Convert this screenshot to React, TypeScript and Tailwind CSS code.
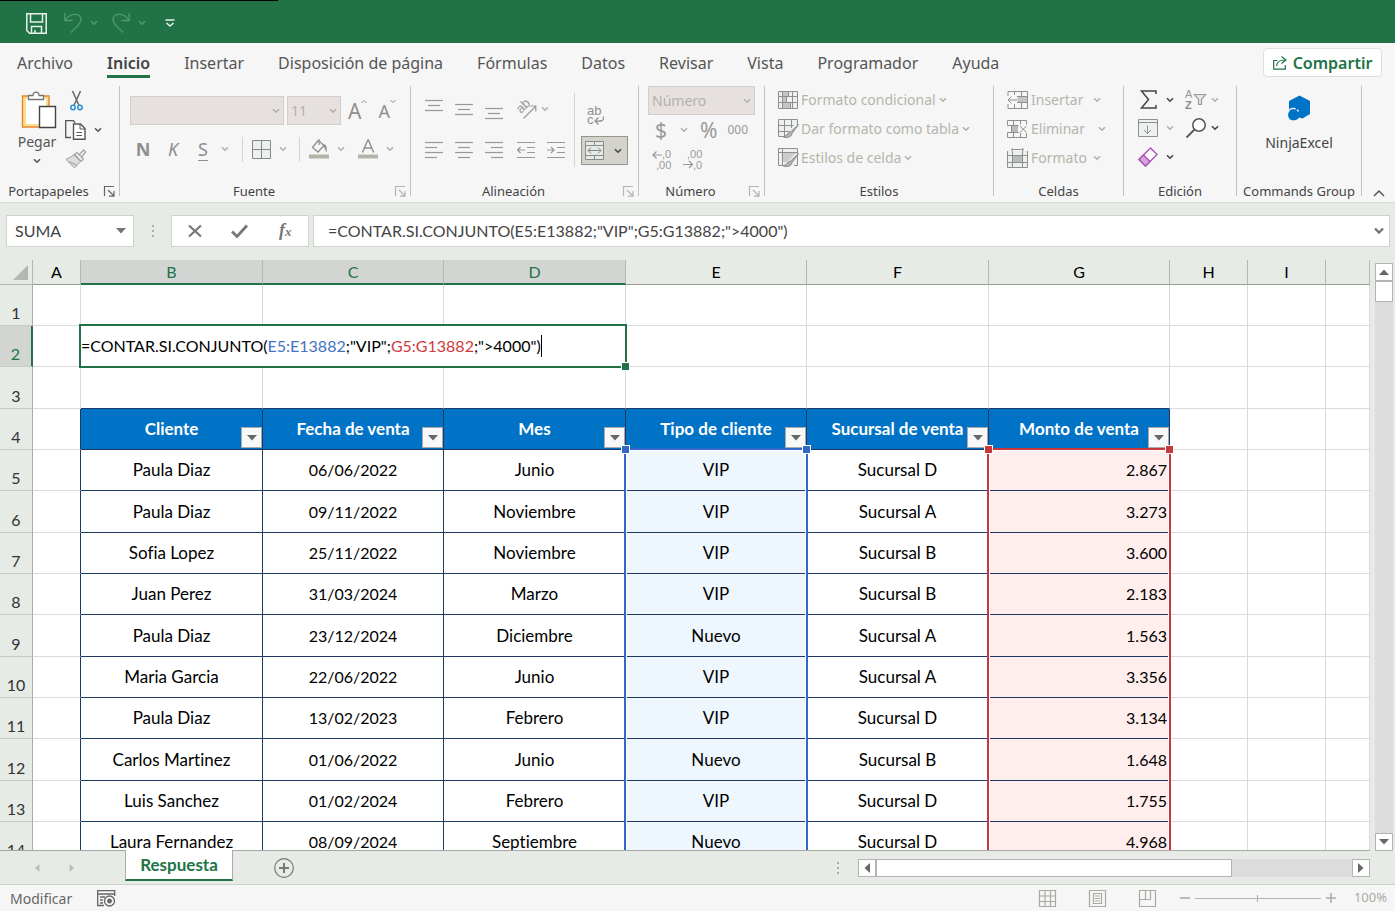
import type { ReactNode } from "react"

const tabs = ['Archivo', 'Inicio', 'Insertar', 'Disposición de página', 'Fórmulas', 'Datos', 'Revisar', 'Vista', 'Programador', 'Ayuda']

const headers = ['Cliente', 'Fecha de venta', 'Mes', 'Tipo de cliente', 'Sucursal de venta', 'Monto de venta']

const rows = [
    ['Paula Diaz', '06/06/2022', 'Junio', 'VIP', 'Sucursal D', '2.867'],
    ['Paula Diaz', '09/11/2022', 'Noviembre', 'VIP', 'Sucursal A', '3.273'],
    ['Sofia Lopez', '25/11/2022', 'Noviembre', 'VIP', 'Sucursal B', '3.600'],
    ['Juan Perez', '31/03/2024', 'Marzo', 'VIP', 'Sucursal B', '2.183'],
    ['Paula Diaz', '23/12/2024', 'Diciembre', 'Nuevo', 'Sucursal A', '1.563'],
    ['Maria Garcia', '22/06/2022', 'Junio', 'VIP', 'Sucursal A', '3.356'],
    ['Paula Diaz', '13/02/2023', 'Febrero', 'VIP', 'Sucursal D', '3.134'],
    ['Carlos Martinez', '01/06/2022', 'Junio', 'Nuevo', 'Sucursal B', '1.648'],
    ['Luis Sanchez', '01/02/2024', 'Febrero', 'VIP', 'Sucursal D', '1.755'],
    ['Laura Fernandez', '08/09/2024', 'Septiembre', 'Nuevo', 'Sucursal D', '4.968'],
]

const Chevron = ({ className = 'text-[#b1b1a8]' }: { className?: string }) => (
    <svg width="8" height="6" viewBox="0 0 8 6" fill="none" stroke="currentColor" strokeWidth="1.6" className={`shrink-0 ${className}`}>
        <path d="M1 1.2 4 4.2 7 1.2" />
    </svg>
)

const Triangle = ({ className = '' }: { className?: string }) => (
    <svg width="10" height="6" viewBox="0 0 10 6" fill="currentColor" className={className}>
        <path d="M0 0h10L5 5.5z" />
    </svg>
)

interface iconProps {
    w: number
    h: number
    className?: string
    children: ReactNode
}

const Icon = ({ w, h, className = '', children }: iconProps) => (
    <svg width={w} height={h} viewBox={`0 0 ${w} ${h}`} fill="none" stroke="currentColor" className={`shrink-0 overflow-visible font-['Liberation_Sans',sans-serif] ${className}`}>
        {children}
    </svg>
)

// horizontal strokes used by every alignment button
const Lines = ({ bars }: { bars: number[][] }) => (
    <Icon w={18} h={20} className="text-[#999]">
        {bars.map(([x, y, len], i) => <path key={i} strokeWidth="1.2" d={`M${x} ${y}.5h${len}`} />)}
    </Icon>
)

const Launcher = ({ dark = false }: { dark?: boolean }) => (
    <button aria-label="Más opciones" className="w-[22px] flex items-center pl-[7px]">
        <Icon w={11} h={11} className={dark ? 'text-[#666]' : 'text-[#b5b5ad]'}>
            <path d="M.5 10V.5H10M4 4l6 6M10 5v5.2H5" strokeWidth="1.2" />
        </Icon>
    </button>
)

interface groupProps {
    label: string
    width: string
    launcher?: ReactNode
    children: ReactNode
}

const Group = ({ label, width, launcher, children }: groupProps) => (
    <section className={`h-[113px] flex flex-col shrink-0 ${width}`}>
        <div className="h-[97px]">{children}</div>
        <div className="flex h-4">
            <h2 className="flex-1 text-center text-[13px] leading-4 text-[#444] whitespace-nowrap">{label}</h2>
            {launcher}
        </div>
    </section>
)

const Divider = () => <div className="w-px h-[110px] bg-[#c3c3bb] shrink-0" />

const Split = ({ label, chevron, children }: { label: string, chevron?: string, children: ReactNode }) => (
    <button aria-label={label} className="flex items-center gap-2">
        <span className="w-5 flex justify-center">{children}</span>
        <Chevron className={chevron} />
    </button>
)

const Clipboard = () => (
    <Group label="Portapapeles" width="w-[119px]" launcher={<Launcher dark />}>
        <div className="flex pl-[17px] gap-2">
            <button className="flex flex-col items-center w-10 pt-[5px] text-[14px] text-[#555]">
                <Icon w={36} h={39} className="ml-1">
                    <path d="M3.500 6.500h23v28h-23z" fill="#fff" stroke="#ffdc94" strokeWidth="3" />
                    <path d="M9 5H1.500v31H18M21 5h7v10" stroke="#e08a2e" strokeWidth="1.400" />
                    <path d="M7.500 8.500v-4h4.500c0-4.500 6-4.500 6 0h4.500v4z" fill="#fff" stroke="#777" strokeWidth="1.300" />
                    <path d="M18.500 15.500h16v21h-16z" fill="#fff" stroke="#444" strokeWidth="1.400" />
                </Icon>
                <span className="leading-6">Pegar</span>
                <Chevron className="text-[#555] mt-1" />
            </button>
            <div className="flex flex-col pt-[3px]">
                <button aria-label="Cortar" className="h-[24px] flex items-center pl-[5px]">
                    <Icon w={13} h={20}>
                        <path d="M2.500 0 8.800 14M10.500 0 4.200 14" stroke="#666" strokeWidth="1.500" />
                        <circle cx="3" cy="16.500" r="2.200" stroke="#2b8fd0" strokeWidth="1.500" />
                        <circle cx="10" cy="16.500" r="2.200" stroke="#2b8fd0" strokeWidth="1.500" />
                    </Icon>
                </button>
                <div className="h-[34px] flex items-center">
                    <button aria-label="Copiar" className="flex items-center gap-2">
                        <Icon w={21} h={20} className="text-[#555]">
                            <path d="M6 17.500H.700V.700h7.500l2 2" strokeWidth="1.300" />
                            <path d="M8.500 4h7l4.500 4.500v10.800H8.500z" fill="#fff" strokeWidth="1.400" />
                            <path d="M15 4v5h5M11.500 12.500h5.500M11.500 15.500h5.500" />
                        </Icon>
                        <Chevron className="text-[#555]" />
                    </button>
                </div>
                <button aria-label="Copiar formato" className="h-[24px] flex items-center">
                    <Icon w={22} h={20} className="text-[#a3a3a3]">
                        <path d="M1 10.500 9 6l6.500 6.500L9.500 19z" fill="#ddd" />
                        <path d="m4 12.500 8 4M9.500 5.500l2.500-2 6.500 6.500-2.500 2.500zM14.500 5.500 18.500.800l2.200 2.200L17 7.500" fill="#eee" strokeWidth="1.200" />
                    </Icon>
                </button>
            </div>
        </div>
    </Group>
)

const FontGroup = () => (
    <Group label="Fuente" width="w-[290px]" launcher={<Launcher />}>
        <div className="flex items-center pl-[10px] pt-[10px] gap-[3px]">
            <label className="relative">
                <select disabled aria-label="Fuente" className="appearance-none w-[154px] h-[29px] bg-[#e6e1de] border border-[#d2ceca] block" />
                <Chevron className="absolute right-1 top-3 text-[#b1b1a8]" />
            </label>
            <label className="relative">
                <select disabled aria-label="Tamaño" className="appearance-none w-[54px] h-[29px] bg-[#e6e1de] border border-[#d2ceca] block pl-[3px] text-[14px] text-[#b4b1ad] opacity-100">
                    <option>11</option>
                </select>
                <Chevron className="absolute right-1 top-3 text-[#b1b1a8]" />
            </label>
            <button aria-label="Aumentar tamaño" className="flex ml-1 text-[#8f8f8f] text-[21px] leading-6">A<Icon w={6} h={5}><path d="m.5 4 2.500-2.500L5.500 4" /></Icon></button>
            <button aria-label="Reducir tamaño" className="flex ml-2 text-[#8f8f8f] text-[18px] leading-6">A<Icon w={6} h={5}><path d="m.5 1 2.500 2.500L5.500 1" /></Icon></button>
        </div>
        <div className="flex items-center h-7 pl-[13px] mt-[10px] gap-[10px] text-[18px] leading-6 text-[#8f8f8f]">
            <button className="w-5 font-bold">N</button>
            <button className="w-5 italic">K</button>
            <Split label="Subrayado"><span className="underline underline-offset-4 decoration-1">S</span></Split>
            <div className="w-px h-[25px] bg-[#d5d5cd] ml-[3px] -mr-[2px]" />
            <Split label="Bordes">
                <Icon w={19} h={19} className="text-[#888]"><path d="M.5.5h18v18H.5zM9.500.5v18M.5 9.500h18" fill="#eaf0ec" /></Icon>
            </Split>
            <div className="w-px h-[25px] bg-[#d5d5cd] ml-[2px] -mr-[1px]" />
            <Split label="Relleno">
                <Icon w={20} h={20} className="text-[#8f8f8f]">
                    <path d="M9 1.500 3.500 8.500l5.500 4.500 6-6.500-5-4.500M10 0v6" strokeWidth="1.300" />
                    <path d="M14 5.500c3.500-.5 3.500 3 3.500 7-1.500-1.500-1.500-4-2.500-5z" fill="#8f8f8f" strokeWidth=".6" />
                    <path d="M0 15.500h20v4H0z" fill="#b4b4aa" stroke="none" />
                </Icon>
            </Split>
            <div className="ml-[3px]">
                <Split label="Color de fuente">
                    <Icon w={20} h={20} className="text-[#8f8f8f]">
                        <path d="M4.500 13.500 9.800 1h.6l5.300 12.500M6.500 9h7.500" strokeWidth="1.400" />
                        <path d="M0 15.500h20v4H0z" fill="#b4b4aa" stroke="none" />
                    </Icon>
                </Split>
            </div>
        </div>
    </Group>
)

const AlignGroup = () => (
    <Group label="Alineación" width="w-[227px]" launcher={<Launcher />}>
        <div className="flex pl-[14px]">
            <div className="flex flex-col gap-[22px] pt-[13px]">
                <div className="flex gap-3 h-5">
                    <button aria-label="Alinear arriba"><Lines bars={[[0, 1, 18], [3, 6, 12], [0, 11, 18]]} /></button>
                    <button aria-label="Alinear en medio"><Lines bars={[[0, 5, 18], [3, 10, 12], [0, 15, 18]]} /></button>
                    <button aria-label="Alinear abajo"><Lines bars={[[0, 9, 18], [3, 14, 12], [0, 19, 18]]} /></button>
                    <button aria-label="Orientación" className="flex items-center gap-1">
                        <Icon w={22} h={20} className="text-[#999]">
                            <path d="m8.500 19.500 12-12M15 7h5.800v5.500" strokeWidth="1.200" />
                            <text transform="translate(6 15) rotate(-45)" fontSize="13" fill="currentColor" stroke="none">ab</text>
                        </Icon>
                        <Chevron />
                    </button>
                </div>
                <div className="flex gap-3 h-5">
                    <button aria-label="Izquierda"><Lines bars={[[0, 1, 18], [0, 6, 12], [0, 11, 18], [0, 16, 12]]} /></button>
                    <button aria-label="Centrar"><Lines bars={[[0, 1, 18], [3, 6, 12], [0, 11, 18], [3, 16, 12]]} /></button>
                    <button aria-label="Derecha"><Lines bars={[[0, 1, 18], [6, 6, 12], [0, 11, 18], [6, 16, 12]]} /></button>
                    <button aria-label="Disminuir sangría">
                        <Icon w={20} h={20} className="text-[#999]"><path d="M2 1.500h18M12 6.500h8M12 11.500h8M2 16.500h18M2 9h8M5.500 6 2.500 9l3 3" strokeWidth="1.200" /></Icon>
                    </button>
                    <button aria-label="Aumentar sangría">
                        <Icon w={18} h={20} className="text-[#999]"><path d="M0 1.500h18M10 6.500h8M10 11.500h8M0 16.500h18M0 9h7M4 6l3 3-3 3" strokeWidth="1.200" /></Icon>
                    </button>
                </div>
            </div>
            <div className="w-px h-[74px] mt-[7px] ml-[9px] bg-[#d5d5cd]" />
            <div className="pl-[6px] pt-[12px]">
                <button aria-label="Ajustar texto" className="block pl-[6px] h-[38px]">
                    <Icon w={20} h={24} className="text-[#8f8f8f]">
                        <text x="0" y="10" fontSize="13" fill="currentColor" stroke="none">ab</text>
                        <text x="0" y="19" fontSize="13" fill="currentColor" stroke="none">c</text>
                        <path d="M16 11.500c2 4.500-2 5-8 4.500M11.500 12.500 8 16l3.500 3.500" strokeWidth="1.200" />
                    </Icon>
                </button>
                <button aria-label="Combinar y centrar" className="w-[47px] h-[29px] bg-[#d3d3cb] border border-[#96968c] flex items-center pl-[3px] gap-[10px]">
                    <Icon w={19} h={19} className="text-[#8a8a8a]">
                        <path d="M.5.5h18v18H.5zM.5 4.500h18M.5 14.500h18M9.500.5v4M9.500 14.500v4M3 9.500h13M6 6.500l-3 3 3 3M13 6.500l3 3-3 3" fill="#e4eae6" />
                    </Icon>
                    <Chevron className="text-[#444]" />
                </button>
            </div>
        </div>
    </Group>
)

const NumberGroup = () => (
    <Group label="Número" width="w-[125px]" launcher={<Launcher />}>
        <div className="pl-[9px] text-[#999]">
            <label className="relative block w-[107px]">
                <select disabled aria-label="Formato de número" className="appearance-none w-full h-[29px] bg-[#e6e1de] border border-[#d2ceca] block pl-[3px] text-[14px] text-[#b4b1ad] opacity-100">
                    <option>Número</option>
                </select>
                <Chevron className="absolute right-1 top-3 text-[#b1b1a8]" />
            </label>
            <div className="flex items-center h-[30px] pl-[7px]">
                <button aria-label="Moneda" className="flex items-center gap-[13px] text-[21px] leading-7">$<Chevron /></button>
                <button className="text-[21px] leading-7 ml-[12px]">%</button>
                <button className="text-[12px] ml-[10px]">000</button>
            </div>
            <div className="flex gap-[10px] pl-1 mt-1">
                <button aria-label="Más decimales">
                    <Icon w={21} h={22} className="text-[#999]">
                        <path d="M1 6h9M4.500 2.500 1 6l3.500 3.500" strokeWidth="1.200" />
                        <text x="10" y="9" fontSize="11" fill="currentColor" stroke="none">,0</text>
                        <text x="4" y="20" fontSize="11" fill="currentColor" stroke="none">,00</text>
                    </Icon>
                </button>
                <button aria-label="Menos decimales">
                    <Icon w={21} h={22} className="text-[#999]">
                        <text x="4" y="9" fontSize="11" fill="currentColor" stroke="none">,00</text>
                        <path d="M0 15.500h9.500M6 12l3.500 3.500L6 19" strokeWidth="1.200" />
                        <text x="10" y="20" fontSize="11" fill="currentColor" stroke="none">,0</text>
                    </Icon>
                </button>
            </div>
        </div>
    </Group>
)

const Brush = () => (
    <path d="M20.500 5.500 12.500 13c-3 0-3 3.500-7 5 3 1.200 8 .5 8.500-3.500z" fill="#b4b4b4" stroke="#8a8a8a" />
)

const StylesGroup = () => (
    <Group label="Estilos" width="w-[228px]">
        <div className="flex flex-col items-start pl-[13px] text-[14px] leading-7 text-[#b5b5ab]">
            <button className="flex items-center gap-[3px] h-[28px]">
                <Icon w={20} h={18} className="text-[#8f8f8f]">
                    <path d="M.5.5h19v17H.5zM4.500.5v17M14.500.5v17M.5 5.500h19M.5 11.500h19" fill="#edf1ee" />
                    <path d="M4.500.5h6v5h-6zM4.500 5.500h4v6h-4zM4.500 11.500h8v6h-8z" fill="#c4c4c4" />
                </Icon>
                Formato condicional <Chevron />
            </button>
            <button className="flex items-center gap-[3px] h-[29px]">
                <Icon w={20} h={19} className="text-[#8f8f8f]">
                    <path d="M8 17.500H.5V.5h19V6M6.500.5v17M13.500.5V9M.5 6.500h15M.5 12.500h11" fill="#edf1ee" />
                    <Brush />
                </Icon>
                Dar formato como tabla <Chevron />
            </button>
            <button className="flex items-center gap-[3px] h-[29px]">
                <Icon w={20} h={19} className="text-[#8f8f8f]">
                    <path d="M8 17.500H.5V.5h19v17H16M4.500.5v17M.5 4.500h19" fill="#edf1ee" />
                    <path d="M5 5h13L9 14H5z" fill="#ccc" stroke="none" />
                    <Brush />
                </Icon>
                Estilos de celda <Chevron />
            </button>
        </div>
    </Group>
)

const CellsGroup = () => (
    <Group label="Celdas" width="w-[129px]">
        <div className="flex flex-col items-start pl-[13px] text-[14px] leading-7 text-[#b5b5ab]">
            <button className="flex items-center gap-[3px] h-[28px]">
                <Icon w={21} h={18} className="text-[#8f8f8f]">
                    <path d="M1 5V.5h19.500v17H1V13M7.500.5V4M14.500.5v17M7.500 13v4.500M10 5.500h10M10 11.500h10M1 9h9M4.500 5.500 1 9l3.500 3.500" />
                    <path d="M10.500 6h9.500v5h-9.500z" fill="#c4c4c4" stroke="none" />
                </Icon>
                <span className="w-[59px] text-left">Insertar</span> <Chevron />
            </button>
            <button className="flex items-center gap-[3px] h-[29px]">
                <Icon w={21} h={18} className="text-[#8f8f8f]">
                    <path d="M.5 5.500v-5h19v4M.5 5.500h11M.5 12.500v5h19v-4M.5 12.500h11M6.500.5v5M13.500.5v4M6.500 12.500v5M13.500 13v4.500M4.500 5.500v7M13 6l6.500 6.500M19.500 6 13 12.500" />
                    <path d="M5 6h6v6H5z" fill="#bbb" stroke="none" />
                </Icon>
                <span className="w-[64px] text-left">Eliminar</span> <Chevron />
            </button>
            <button className="flex items-center gap-[3px] h-[29px]">
                <Icon w={21} h={20} className="text-[#8f8f8f]">
                    <path d="M.5 3v16.500h20V3M.5 7.500h20M.5 14.500h20M5.500 3v16.500M15.500 3v16.500M5 1.500h11M5 0v3M16 0v3" fill="#edf1ee" />
                    <path d="M6 8h9v6H6z" fill="#bbb" stroke="none" />
                </Icon>
                <span className="w-[59px] text-left">Formato</span> <Chevron />
            </button>
        </div>
    </Group>
)

const EditGroup = () => (
    <Group label="Edición" width="w-[112px]">
        <div className="flex flex-col pl-[14px]">
            <div className="flex h-[27px] gap-[11px]">
                <Split label="Autosuma" chevron="text-[#444]">
                    <Icon w={17} h={20} className="text-[#444]"><path d="M16 4V1H1.500l7 8.500-7 8.500H16v-3" strokeWidth="1.500" /></Icon>
                </Split>
                <button aria-label="Ordenar y filtrar" className="flex items-center gap-1">
                    <Icon w={22} h={21} className="text-[#999]">
                        <text x="0" y="9" fontSize="11" fill="currentColor" stroke="none">A</text>
                        <text x="0" y="20" fontSize="11" fill="#8a8a8a" stroke="none" fontWeight="bold">Z</text>
                        <path d="M9.500 5.500h11l-4 5v5h-3v-5z" fill="#e4e8e4" strokeWidth="1.200" />
                    </Icon>
                    <Chevron />
                </button>
            </div>
            <div className="flex h-[30px] gap-[11px]">
                <Split label="Rellenar">
                    <Icon w={20} h={18} className="text-[#8f8f8f]">
                        <path d="M.5.5h19v17H.5zM.5 3.500h19M9.500 6.500v8M6 11l3.500 3.500L13 11" fill="#edf1ee" />
                    </Icon>
                </Split>
                <button aria-label="Buscar" className="flex items-center gap-1">
                    <Icon w={22} h={20} className="text-[#555]">
                        <circle cx="14" cy="7" r="6.200" fill="#fff" strokeWidth="1.500" />
                        <path d="m9.500 11.500-8 8" strokeWidth="1.800" />
                    </Icon>
                    <Chevron className="text-[#444]" />
                </button>
            </div>
            <div className="flex h-[28px]">
                <Split label="Borrar" chevron="text-[#444]">
                    <Icon w={20} h={20} className="text-[#a94fb5]">
                        <path d="M1 12.500 12.500 1l6.500 6.500L7.500 19z" fill="#fff" strokeWidth="1.300" />
                        <path d="m1 12.500 4.500-4.500 6.500 6.500L7.500 19z" fill="#d9a3dd" strokeWidth="1.300" />
                    </Icon>
                </Split>
            </div>
        </div>
    </Group>
)

const Ribbon = () => (
    <div className="flex items-start pt-[2px] h-[118px] bg-[#f6f6f6]">
        <Clipboard />
        <Divider />
        <FontGroup />
        <Divider />
        <AlignGroup />
        <Divider />
        <NumberGroup />
        <Divider />
        <StylesGroup />
        <Divider />
        <CellsGroup />
        <Divider />
        <EditGroup />
        <Divider />
        <Group label="Commands Group" width="w-[124px]">
            <button className="w-full flex flex-col items-center pt-[9px] gap-3 text-[14px] leading-5 text-[#444]">
                <Icon w={24} h={26}>
                    <path d="M12.500.500 23 6v13l-7.500 4.500-3.500-1c-2 3.500-7.500 3.500-9.500 1.500-2-3-2-6 .5-8.500L2 13V6z" fill="#0173c7" stroke="none" />
                    <path d="M3 14.500c3-2 6.500-1 8.500 2" stroke="#fff" strokeWidth="1.300" strokeDasharray="6 1.500" />
                </Icon>
                NinjaExcel
            </button>
        </Group>
        <Divider />
        <button aria-label="Contraer la cinta" className="flex-1 flex justify-center mt-[104px]">
            <Icon w={12} h={7} className="text-[#555]"><path d="m1 6 5-5 5 5" strokeWidth="1.500" /></Icon>
        </button>
    </div>
)

const Dots = () => (
    <div className="flex flex-col gap-[3px]">
        <div className="size-[2px] bg-[#aaa]" />
        <div className="size-[2px] bg-[#aaa]" />
        <div className="size-[2px] bg-[#aaa]" />
    </div>
)

const FormulaBar = () => (
    <div className="flex h-[58px] pt-3 pr-[5px] pl-[6px] bg-[#e6ebe6] border-t border-[#d8dcd6] font-[Lato,sans-serif] text-[16px] text-[#444]">
        <div className="flex items-center w-[128px] h-8 bg-white border border-[#cfd2ce] pr-[7px]">
            <input aria-label="Cuadro de nombres" defaultValue="SUMA" className="flex-1 min-w-0 pl-2 outline-none" />
            <button aria-label="Nombres"><Triangle className="text-[#777]" /></button>
        </div>
        <div className="w-[37px] h-8 flex justify-center items-center"><Dots /></div>
        <div className="flex items-center w-[138px] h-8 bg-white border border-[#cfd2ce] text-[#777]">
            <button aria-label="Cancelar" className="flex-1 flex justify-center"><Icon w={14} h={14}><path d="m1 1.500 12 11M13 1.500l-12 11" strokeWidth="2.200" /></Icon></button>
            <button aria-label="Introducir" className="flex-1 flex justify-center"><Icon w={17} h={14}><path d="m1 7.500 5 5L16 1.500" strokeWidth="2.800" /></Icon></button>
            <button aria-label="Insertar función" className="flex-1 font-['Liberation_Serif',serif] italic font-bold text-[18px] leading-5">f<span className="text-[13px]">x</span></button>
        </div>
        <div className="flex flex-1 ml-[4px] items-center h-8 bg-white border border-[#cfd2ce] pr-[5px]">
            <input aria-label="Barra de fórmulas" defaultValue={'=CONTAR.SI.CONJUNTO(E5:E13882;"VIP";G5:G13882;">4000")'} className="flex-1 pl-[14px] outline-none" />
            <button aria-label="Expandir"><Icon w={10} h={8} className="text-[#777]"><path d="m1 1.500 4 4 4-4" strokeWidth="2.400" /></Icon></button>
        </div>
    </div>
)

const rowClass = 'h-[41px] nth-[3n]:h-[42px]'

const RowHead = ({ n, selected = false }: { n: number, selected?: boolean }) => (
    <th className={`align-bottom font-normal p-0 leading-6 border-b border-[#c6cac6] ${selected ? 'bg-[#d3d5d3] text-[#217346] border-r-2 border-r-[#217346]' : 'bg-[#e6ebe6] text-[#333] border-r border-r-[#ababab]'}`}>{n}</th>
)

const Blank = ({ className = 'border-[#dadada]' }: { className?: string }) => (
    <td className={`border-r border-b ${className}`} />
)

const Handle = ({ className }: { className: string }) => (
    <div className={`absolute size-[9px] border border-white ${className}`} />
)

const Sheet = () => (
    <div className="flex-1 min-h-0 overflow-hidden bg-white border-b border-[#a6a6a6]">
        <table className="w-full table-fixed border-separate border-spacing-0 font-[Lato,sans-serif] text-[16px] text-black [font-variant-ligatures:none]">
            <colgroup>
                <col className="w-[33px]" />
                <col className="w-[48px]" />
                <col className="w-[182px]" />
                <col className="w-[181px]" />
                <col className="w-[182px]" />
                <col className="w-[181px]" />
                <col className="w-[182px]" />
                <col className="w-[181px]" />
                <col className="w-[78px]" />
                <col className="w-[78px]" />
                <col />
            </colgroup>
            <thead>
                <tr className="h-[25px] bg-[#e6ebe6]">
                    <th className="border-r border-b border-[#b4b8b4]">
                        <svg width="15" height="15" viewBox="0 0 15 15" fill="#b4b8b4" className="ml-auto mr-1"><path d="M15 0v15H0z" /></svg>
                    </th>
                    {['A', 'B', 'C', 'D', 'E', 'F', 'G', 'H', 'I', ''].map((col) => (
                        <th key={col} className={`font-normal leading-5 p-0 border-r border-r-[#b4b8b4] ${['B', 'C', 'D'].includes(col) ? 'bg-[#d3d5d3] text-[#217346] border-b-2 border-b-[#217346]' : 'border-b border-b-[#999]'}`}>{col}</th>
                    ))}
                </tr>
            </thead>
            <tbody>
                <tr className={rowClass}>
                    <RowHead n={1} />
                    {[...Array(10)].map((_, i) => <Blank key={i} />)}
                </tr>
                <tr className={rowClass}>
                    <RowHead n={2} selected />
                    <Blank />
                    <td colSpan={3} className="relative p-0 border-r border-b border-[#dadada]">
                        <div className="absolute z-10 -inset-[2px] border-2 border-[#217346] bg-white flex items-center whitespace-nowrap">
                            <span>=CONTAR.SI.CONJUNTO(</span>
                            <span className="text-[#4472c4]">E5:E13882</span>
                            <span>;"VIP";</span>
                            <span className="text-[#d13a3f]">G5:G13882</span>
                            <span>;"&gt;4000")</span>
                            <span className="w-px h-[22px] bg-black" />
                            <Handle className="bg-[#217346] -right-[5px] -bottom-[5px]" />
                        </div>
                    </td>
                    {[...Array(6)].map((_, i) => <Blank key={i} />)}
                </tr>
                <tr className={rowClass}>
                    <RowHead n={3} />
                    <Blank />
                    {headers.map((h) => <Blank key={h} className="border-r-[#dadada] border-b-[#1f3864]" />)}
                    {[...Array(3)].map((_, i) => <Blank key={i} />)}
                </tr>
                <tr className={rowClass}>
                    <RowHead n={4} />
                    <Blank className="border-b-[#dadada] border-r-[#1f3864]" />
                    {headers.map((h) => (
                        <th key={h} className="relative p-0 bg-[#0173c7] text-white text-[17px] font-bold border-r border-b border-[#1f3864]">
                            {h}
                            <button aria-label={`Filtrar ${h}`} className="absolute right-0 bottom-px size-[21px] bg-[#f6f8fa] border border-[#aaa] flex items-center justify-center">
                                <Triangle className="text-[#666]" />
                            </button>
                        </th>
                    ))}
                    {[...Array(3)].map((_, i) => <Blank key={i} />)}
                </tr>
                {rows.map((row, r) => (
                    <tr key={r} className={rowClass}>
                        <RowHead n={r + 5} />
                        <Blank className="border-b-[#dadada] border-r-[#1f3864]" />
                        {row.map((value, c) => (
                            <td key={c} className={`relative p-0 border-r border-b border-[#1f3864] ${c === 5 ? 'text-right pr-[2px] bg-[#ffeeed]' : 'text-center'} ${c === 3 ? 'bg-[#eef6fe]' : ''} ${c === 1 || c === 5 ? '' : 'text-[17px]'}`}>
                                {value}
                                {r === 0 && c === 3 && (
                                    <div className="absolute z-10 -left-[2px] -right-[2px] -top-[2px] h-screen border-2 border-[#3468c8] inset-shadow-[0_0_0_1px_white]">
                                        <Handle className="bg-[#3468c8] -left-[5px] -top-[5px]" />
                                        <Handle className="bg-[#3468c8] -right-[5px] -top-[5px]" />
                                    </div>
                                )}
                                {r === 0 && c === 5 && (
                                    <div className="absolute z-10 -left-[2px] -right-[2px] -top-[2px] h-screen border-2 border-[#c8373c] inset-shadow-[0_0_0_1px_white]">
                                        <Handle className="bg-[#c8373c] -left-[5px] -top-[5px]" />
                                        <Handle className="bg-[#c8373c] -right-[5px] -top-[5px]" />
                                    </div>
                                )}
                            </td>
                        ))}
                        {[...Array(3)].map((_, i) => <Blank key={i} />)}
                    </tr>
                ))}
            </tbody>
        </table>
    </div>
)

const scrollButton = 'size-[18px] shrink-0 bg-white border border-[#b4b4b4] flex items-center justify-center text-[#666]'

const App: React.FC = () => {
    return (
        <div className="h-screen flex flex-col overflow-hidden bg-[#f6f6f6] font-['Noto_Sans',sans-serif]">
            <header className="bg-[#217346] text-[#e8f1ec]">
                <div className="h-px w-[278px] bg-black" />
                <div className="flex items-center h-[42px] pl-[26px] pt-[2px]">
                    <button aria-label="Guardar">
                        <Icon w={21} h={21}>
                            <path d="M.800.800h19.400v19.400H3.500L.800 17.500zM4.500 1v8h12V1M5.500 20v-6.500h10V20M9 20v-3" strokeWidth="1.500" />
                        </Icon>
                    </button>
                    <button aria-label="Deshacer" className="flex items-center gap-2 ml-[17px] text-[#4f9a6f]">
                        <Icon w={18} h={20}><path d="M.800 0v7.500h8M1 7.500C6-1 16 0 17 6c.5 5-5 8-10 13.500" strokeWidth="1.300" /></Icon>
                        <Chevron className="text-[#4f9a6f]" />
                    </button>
                    <button aria-label="Rehacer" className="flex items-center gap-2 ml-[14px] text-[#4f9a6f]">
                        <Icon w={18} h={20}><path d="M17.200 0v7.500h-8M17 7.500C12-1 2 0 1 6c-.5 5 5 8 10 13.500" strokeWidth="1.300" /></Icon>
                        <Chevron className="text-[#4f9a6f]" />
                    </button>
                    <button aria-label="Personalizar barra" className="ml-[19px]">
                        <Icon w={10} h={8}><path d="M.5 1h9M1.500 4 5 7l3.500-3" strokeWidth="1.600" /></Icon>
                    </button>
                </div>
            </header>
            <nav className="flex items-start h-[41px] pl-[17px] pr-[13px] pt-2 text-[16px] leading-6 text-[#555]">
                <div className="flex flex-1 gap-[34px]">
                    {tabs.map((tab) => (
                        <a key={tab} href="#" className={`whitespace-nowrap ${tab === 'Inicio' ? 'font-semibold text-[#444] border-b-[3px] border-[#217346]' : ''}`}>{tab}</a>
                    ))}
                </div>
                <button className="flex items-center justify-center gap-[6px] w-[119px] h-[29px] -mt-[3px] bg-white border border-[#e1dedc] rounded-sm font-semibold text-[#217346]">
                    <Icon w={14} h={14}>
                        <path d="M4.500 4.500H.7v8.700h11.600V9M3.500 10c.5-4 3-6 8-6M8.500.500 13 4 8.500 7.500" strokeWidth="1.200" />
                    </Icon>
                    Compartir
                </button>
            </nav>
            <Ribbon />
            <FormulaBar />
            <main className="flex flex-1 min-h-0">
                <Sheet />
                <div className="w-[25px] pt-[3px] pr-[2px] pl-1 bg-[#e6ebe6] flex flex-col items-center">
                    <button aria-label="Subir" className={scrollButton}><Triangle className="rotate-180" /></button>
                    <div className="flex-1 w-[18px] bg-[#dcdcdc]">
                        <div className="h-[21px] bg-white border border-[#b4b4b4]" />
                    </div>
                    <button aria-label="Bajar" className={scrollButton}><Triangle /></button>
                </div>
            </main>
            <div className="flex h-[33px] bg-[#e6ebe6] pr-[25px]">
                <div className="w-[125px] flex items-center pl-[33px] gap-[27px] text-[#b9bdb9]">
                    <button aria-label="Hoja anterior"><Triangle className="rotate-90 w-2" /></button>
                    <button aria-label="Hoja siguiente"><Triangle className="-rotate-90 w-2" /></button>
                </div>
                <button className="relative -mt-px w-[108px] h-[31px] bg-white border-x border-[#ababab] border-b-2 border-b-[#217346] font-[Lato,sans-serif] font-bold text-[17px] text-[#217346]">Respuesta</button>
                <button aria-label="Hoja nueva" className="ml-[41px]">
                    <Icon w={20} h={20} className="text-[#777]">
                        <circle cx="10" cy="10" r="9.300" strokeWidth="1.200" />
                        <path d="M10 5v10M5 10h10" strokeWidth="2" />
                    </Icon>
                </button>
                <div className="flex flex-1 items-center justify-end">
                    <Dots />
                    <div className="flex w-[512px] ml-[19px] bg-[#dcdcdc]">
                        <button aria-label="Izquierda" className={scrollButton}><Triangle className="rotate-90" /></button>
                        <div className="flex-1">
                            <div className="w-[356px] h-[18px] bg-white border border-[#b4b4b4]" />
                        </div>
                        <button aria-label="Derecha" className={scrollButton}><Triangle className="-rotate-90" /></button>
                    </div>
                </div>
            </div>
            <footer className="flex items-center h-[27px] shrink-0 border-t border-[#cfd2ca] bg-[#f6f6f6] pl-[10px] pr-2 text-[13px] text-[#666]">
                <span className="w-[87px] text-[14px]">Modificar</span>
                <button aria-label="Grabar macro">
                    <Icon w={19} h={17} className="text-[#666]">
                        <path d="M7 15.500H.700V.700h17V6M.7 4h17M3 7h5M3 10h3M3 13h3" strokeWidth="1.300" />
                        <circle cx="12.500" cy="11" r="5" strokeWidth="1.300" />
                        <circle cx="12.500" cy="11" r="2" fill="currentColor" />
                    </Icon>
                </button>
                <div className="flex flex-1 items-center justify-end text-[#aaaaa2]">
                    <div className="flex gap-[33px]">
                        <button aria-label="Normal"><Icon w={17} h={17}><path d="M.5.5h16v16H.5zM6 .5v16M11.500.5v16M.5 6h16M.5 11.500h16" strokeWidth="1.200" /></Icon></button>
                        <button aria-label="Diseño de página"><Icon w={17} h={17}><path d="M.5.5h16v16H.5zM4.500 3.500h8v10h-8zM6 6h5M6 8.500h5M6 11h5" strokeWidth="1.200" /></Icon></button>
                        <button aria-label="Salto de página"><Icon w={17} h={17}><path d="M.5.5h16v16H.5zM6.500.5v9M11.500.5v9M.5 9.500h11" strokeWidth="1.200" /></Icon></button>
                    </div>
                    <button aria-label="Alejar" className="ml-6"><Icon w={10} h={10}><path d="M0 5h10" strokeWidth="1.500" /></Icon></button>
                    <input type="range" aria-label="Zoom" className="appearance-none w-[126px] h-[9px] mx-[5px] bg-transparent [&::-webkit-slider-runnable-track]:h-px [&::-webkit-slider-runnable-track]:bg-[#b5b5ad] [&::-webkit-slider-thumb]:appearance-none [&::-webkit-slider-thumb]:w-px [&::-webkit-slider-thumb]:h-[7px] [&::-webkit-slider-thumb]:-mt-[3px] [&::-webkit-slider-thumb]:bg-[#aaaaa2]" />
                    <button aria-label="Acercar"><Icon w={10} h={10}><path d="M0 5h10M5 0v10" strokeWidth="1.500" /></Icon></button>
                    <span className="ml-[18px]">100%</span>
                </div>
            </footer>
        </div>
    )
}

export default App
